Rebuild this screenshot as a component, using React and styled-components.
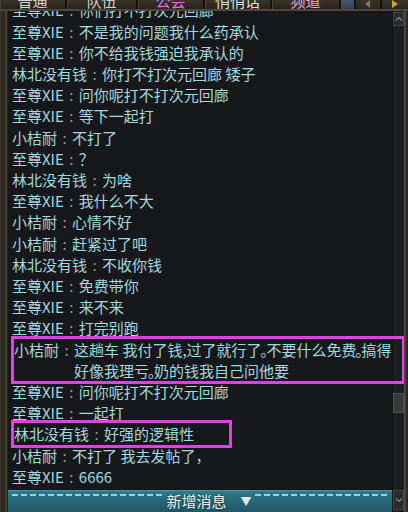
import styled, { createGlobalStyle, css } from 'styled-components'

const GlobalStyle = createGlobalStyle`
  html, body {
    margin: 0;
    padding: 0;
    background: #16171a;
  }
  body {
    font-family: "Noto Sans CJK SC", "Noto Sans", sans-serif;
  }
`

const tabs = [
  { label: '普通', color: '#d6d6d2', width: 67 },
  { label: '队伍', color: '#cfcfcb', width: 71 },
  { label: '公会', color: '#e070e6', width: 67 },
  { label: '悄悄话', color: '#d9e2e0', width: 67 },
  { label: '频道', color: '#e6a2dc', width: 69 },
]

const messages = [
  { name: '至尊XIE', text: '你们打不打次元回廊' },
  { name: '至尊XIE', text: '不是我的问题我什么药承认' },
  { name: '至尊XIE', text: '你不给我钱强迫我承认的' },
  { name: '林北没有钱', text: '你打不打次元回廊 矮子' },
  { name: '至尊XIE', text: '问你呢打不打次元回廊' },
  { name: '至尊XIE', text: '等下一起打' },
  { name: '小桔耐', text: '不打了' },
  { name: '至尊XIE', text: '？' },
  { name: '林北没有钱', text: '为啥' },
  { name: '至尊XIE', text: '我什么不大' },
  { name: '小桔耐', text: '心情不好' },
  { name: '小桔耐', text: '赶紧过了吧' },
  { name: '林北没有钱', text: '不收你钱' },
  { name: '至尊XIE', text: '免费带你' },
  { name: '至尊XIE', text: '来不来' },
  { name: '至尊XIE', text: '打完别跑' },
  {
    name: '小桔耐',
    text: '这趟车 我付了钱,过了就行了。不要什么免费。搞得\n好像我理亏。奶的钱我自己问他要',
    mark: 'wide',
  },
  { name: '至尊XIE', text: '问你呢打不打次元回廊' },
  { name: '至尊XIE', text: '一起打' },
  { name: '林北没有钱', text: '好强的逻辑性', mark: 'short' },
  { name: '小桔耐', text: '不打了 我去发帖了，' },
  { name: '至尊XIE', text: '6666' },
]

// small in-game punctuation takes only a few pixels
function renderText(text) {
  return text.split(/([。,])/).map((part, i) =>
    part === '。' || part === ',' ? (
      <Punct key={i} $dot={part === '。'}>
        {part === '。' ? '｡' : ','}
      </Punct>
    ) : (
      part
    )
  )
}

function Chevron({ down }) {
  return (
    <svg width="8" height="6" viewBox="0 0 8 6">
      <polyline
        points={down ? '1,1.5 4,4.5 7,1.5' : '1,4.5 4,1.5 7,4.5'}
        fill="none"
        stroke="#8a8a86"
        strokeWidth="1.2"
      />
    </svg>
  )
}

export default function App() {
  return (
    <Window>
      <GlobalStyle />
      <TabBar>
        {tabs.map((t) => (
          <Tab key={t.label} $w={t.width} $color={t.color}>
            {t.label}
          </Tab>
        ))}
        <TabBlock />
        <TabButton>
          <svg width="6" height="8" viewBox="0 0 6 8">
            <polygon points="5,0 0,4 5,8" fill="#7d776c" />
          </svg>
        </TabButton>
        <TabButton $last>
          <svg width="6" height="8" viewBox="0 0 6 8">
            <polygon points="0,0 6,4 0,8" fill="#c9a23a" />
          </svg>
        </TabButton>
      </TabBar>
      <Body>
        <LeftFrame />
        <Content>
          <Log>
            {messages.map((m, i) => (
              <Line key={i} $mark={m.mark}>
                <Name>{m.name}</Name>
                <Colon>:</Colon>
                <Text>{renderText(m.text)}</Text>
              </Line>
            ))}
          </Log>
          <NewBar>
            <Dashes $grow={148} />
            <NewLabel>新增消息</NewLabel>
            <NewArrow>▼</NewArrow>
            <Dashes $grow={132} />
          </NewBar>
          <ScrollBar>
            <ScrollButton>
              <Chevron />
            </ScrollButton>
            <Track>
              <Thumb style={{ marginTop: 367 }} />
            </Track>
            <ScrollButton $down>
              <Chevron down />
            </ScrollButton>
          </ScrollBar>
        </Content>
        <RightFrame />
      </Body>
    </Window>
  )
}

const Window = styled.div`
  width: 408px;
  height: 512px;
  display: flex;
  flex-direction: column;
  overflow: hidden;
  background: #16171a;
`
const TabBar = styled.div`
  display: flex;
  height: 9px;
  flex-shrink: 0;
  overflow: hidden;
  background: linear-gradient(#3b352c, #28231d);
  border-bottom: 2px solid #4f473b;
`
const Tab = styled.div`
  width: ${(p) => p.$w}px;
  flex-shrink: 0;
  display: flex;
  justify-content: center;
  align-items: flex-end;
  padding-bottom: 1px;
  box-sizing: border-box;
  color: ${(p) => p.$color};
  font-size: 15px;
  line-height: 15px;
  border-right: 2px solid #16130f;
  box-shadow: inset 1px 0 0 #4a4236;
`
const TabBlock = styled.div`
  width: 13px;
  background: linear-gradient(#4a5570, #35405a);
  border-right: 2px solid #16130f;
`
const TabButton = styled.div`
  width: 24px;
  display: flex;
  align-items: flex-end;
  justify-content: center;
  padding-bottom: 1px;
  background: linear-gradient(#3a342b, #2a251f);
  border-right: ${(p) => (p.$last ? 'none' : '2px solid #16130f')};
  flex: ${(p) => (p.$last ? 1 : 'none')};
`
const Body = styled.div`
  flex: 1;
  display: flex;
  min-height: 0;
`
const LeftFrame = styled.div`
  width: 8px;
  flex-shrink: 0;
  background: linear-gradient(
    to right,
    #3a332b 0,
    #2b261f 60%,
    #564d40 75%,
    #3a342c 88%,
    #131210 100%
  );
`
const RightFrame = styled.div`
  width: 4px;
  flex-shrink: 0;
  background: linear-gradient(to right, #5d5445, #3a342b 50%, #231f1a);
`
const Content = styled.div`
  position: relative;
  flex: 1;
  display: flex;
  flex-direction: column;
  min-width: 0;
  background: #17181b;
`
const Log = styled.div`
  flex: 1;
  min-height: 0;
  display: flex;
  flex-direction: column;
  justify-content: flex-end;
  overflow: hidden;
  padding: 0 12px 3px 4px;
`
const Line = styled.div`
  flex-shrink: 0;
  display: flex;
  font-size: 15px;
  line-height: 21.2px;
  color: #a3d9de;
  white-space: nowrap;

  ${(p) =>
    p.$mark &&
    css`
      position: relative;
      z-index: 1;
      outline: 3px solid #e23fe6;
      margin-left: 2px;
    `}
  ${(p) =>
    p.$mark === 'wide' &&
    css`
      margin-right: -10px;
    `}
  ${(p) =>
    p.$mark === 'short' &&
    css`
      width: 215px;
    `}
`
const Name = styled.span`
  flex-shrink: 0;
`
const Colon = styled.span`
  flex-shrink: 0;
  width: 15px;
  text-align: center;
  color: #8c9c9f;
`
const Text = styled.span`
  white-space: pre;
`
const Punct = styled.span`
  display: inline-block;
  width: ${(p) => (p.$dot ? 5 : 4)}px;
  overflow: visible;
  text-indent: ${(p) => (p.$dot ? -1 : 0)}px;
`
const NewBar = styled.div`
  height: 22px;
  flex-shrink: 0;
  margin-right: 12px;
  display: flex;
  align-items: center;
  padding: 0 4px;
  background: linear-gradient(#4c9aa8 0, #2f7887 2px, #256574 60%, #1f5663 100%);
`
const Dashes = styled.div`
  flex: ${(p) => p.$grow};
  align-self: flex-start;
  margin-top: 4px;
  height: 2px;
  background: repeating-linear-gradient(
    90deg,
    #92d4df 0 6px,
    transparent 6px 9px
  );
`
const NewLabel = styled.span`
  margin-left: 5px;
  color: #f2f2f2;
  font-size: 15px;
  line-height: 22px;
  text-shadow: 0 0 2px #0e2a30;
`
const NewArrow = styled.span`
  margin: 0 3px 0 14px;
  color: #dfe7ea;
  font-size: 11px;
  line-height: 22px;
`
const ScrollBar = styled.div`
  position: absolute;
  top: 0;
  right: 0;
  bottom: 0;
  width: 12px;
  display: flex;
  flex-direction: column;
  background: #1d1e21;
  border-left: 1px solid #121214;
  box-sizing: border-box;
`
const ScrollButton = styled.div`
  height: ${(p) => (p.$down ? 20 : 14)}px;
  margin-top: ${(p) => (p.$down ? 0 : 1)}px;
  margin-bottom: ${(p) => (p.$down ? 2 : 0)}px;
  display: flex;
  align-items: center;
  justify-content: center;
  background: #2a2b2d;
  border: 1px solid #454542;
  box-sizing: border-box;
`
const Track = styled.div`
  flex: 1;
  display: flex;
  flex-direction: column;
`
const Thumb = styled.div`
  height: 20px;
  background: #38393a;
  border: 1px solid #55554f;
  box-sizing: border-box;
`
